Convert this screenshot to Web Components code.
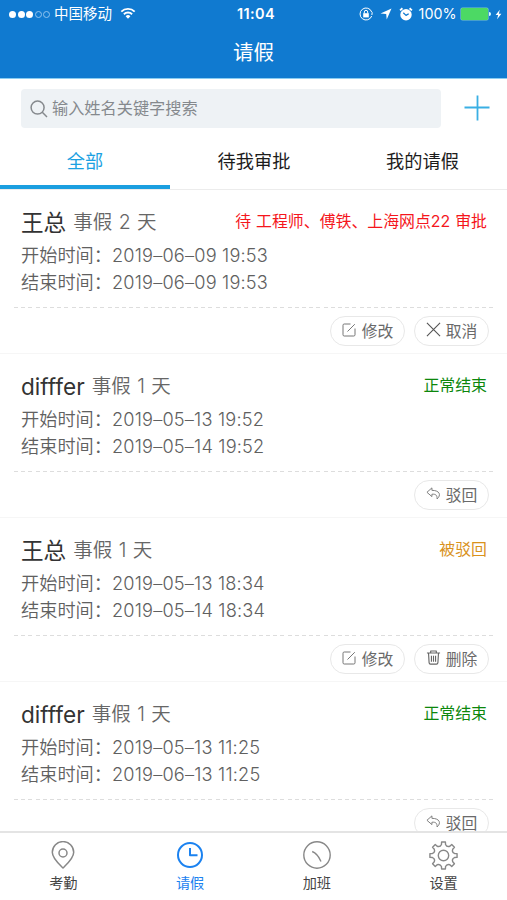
<!DOCTYPE html>
<html lang="zh-CN">
<head>
<meta charset="utf-8">
<title>请假</title>
<style>
html,body{margin:0;height:100%;overflow:hidden;background:#fff}
body{font-family:Inter,"Noto Sans CJK SC",sans-serif;color:#666}
</style>
</head>
<body>
<leave-app></leave-app>
<script>
const define = (name, html, setup) => customElements.define(name, class extends HTMLElement {
  connectedCallback() {
    if (this.shadowRoot) return;
    const root = this.attachShadow({mode: 'open'});
    const t = document.createElement('template');
    t.innerHTML = html;
    if (setup) setup(this, t.content);
    root.append(document.importNode(t.content, true));
  }
});

// Outline of a cog with eight rounded teeth, centred on the origin
const cog = (() => {
  const p = (r, deg) => { const a = deg * Math.PI / 180; return (r * Math.sin(a)).toFixed(2) + ' ' + (-r * Math.cos(a)).toFixed(2); };
  let d = '';
  for (let i = 0; i < 8; i++) {
    const a = i * 45;
    d += (i ? 'L' : 'M') + p(11.2, a - 10.5) + 'L' + p(13.7, a - 8) + 'L' + p(13.7, a + 8) + 'L' + p(11.2, a + 10.5) + 'Q' + p(8.8, a + 22.5) + ' ' + p(11.2, a + 34.5);
  }
  return d + 'Z';
})();

const icons = {
  search: ['0 0 18 18', '<circle cx="7.6" cy="7.6" r="6.5"/><path d="M12.3 12.3 17 17"/>', 1.5],
  plus: ['0 0 26 26', '<path d="M13.500 0.500V25.500M0.500 12.500H25.500"/>', 1.8],
  edit: ['0 0 14 14', '<path d="M8.500 1H2.200Q1 1 1 2.200V11.800Q1 13 2.200 13H11.800Q13 13 13 11.800V5.500M5.500 8.500 12.800 1.200"/>', 1],
  cross: ['0 0 16 16', '<path d="M1 1 15 15M15 1 1 15"/>', 1.2],
  back: ['0 0 16 14', '<path d="M6.300 1 1 5.700 6.300 10.300V7.800C10.500 7.300 12 9 11.800 12.800 16.300 9 15 3.700 6.300 3.600Z"/>', 1],
  trash: ['0 0 16 16', '<path d="M1 3.200H15M5 3V1H11V3M2.700 3.500 3.300 13.500Q3.400 15 4.800 15H11.200Q12.600 15 12.700 13.500L13.300 3.500M5.800 6V12.400M8 6V12.400M10.200 6V12.400"/>', 1.2],
  pin: ['0 0 28 28', '<path d="M14 27C10.500 23.500 3.300 17.500 3.300 11.300A10.700 10.700 0 0 1 24.700 11.300C24.700 17.500 17.500 23.500 14 27Z"/><circle cx="14" cy="12" r="4"/>', 1.5],
  clock: ['0 0 28 28', '<circle cx="14" cy="14" r="12"/><path d="M14 7V14.200H21.500"/>', 2],
  overtime: ['0 0 28 28', '<circle cx="14" cy="14" r="13.200"/><path d="M9.200 10.500Q14.500 12.500 18 20.500"/>', 1.4],
  gear: ['-14.500 -14.500 29 29', '<path d="' + cog + '"/><circle r="5.200"/>', 1.4],
  wifi: ['0 0 16 12', '<path d="M1.300 4.600A9.500 9.500 0 0 1 14.700 4.600M3.900 7.200A5.900 5.900 0 0 1 12.100 7.200" stroke-width="1.900"/><path d="M8 11.700 5.600 9.200A3.400 3.400 0 0 1 10.400 9.200Z" fill="currentColor" stroke="none"/>', 1.7],
  lock: ['0 0 14 14', '<path d="M12.700 5A6 6 0 1 0 12.700 9M13.200 5.200 12.900 8"/><rect x="4.200" y="6.200" width="5.600" height="4.200" fill="currentColor" stroke="none"/><path d="M5.300 6.500V5A1.700 1.700 0 0 1 8.700 5V6.500"/>', 1],
  arrow: ['0 0 12 12', '<path d="M11.500 0.500 6.700 11.500 6.200 5.900 0.500 5.500Z" fill="currentColor" stroke="none"/>', 0],
  alarm: ['0 0 13 13', '<circle cx="6.500" cy="7.200" r="5.300" fill="currentColor" stroke="none"/><path d="M1 3.200 3.200 1.200M9.800 1.200 12 3.200" stroke-width="1.700"/><path d="M4 5.400 6.500 7.800 9 6.200" stroke="#107ad0" stroke-width="1.200"/>', 1],
  bolt: ['0 0 8 11', '<path d="M5.500 0 0.700 6H3.600L2.400 11 7.300 4.700H4.400Z" fill="currentColor" stroke="none"/>', 0]
};
define('ui-icon', `<style>:host{display:inline-flex;flex:none}svg{display:block;width:100%;height:100%;fill:none;stroke:currentColor;stroke-linejoin:round}</style><svg></svg>`, (el, root) => {
  const [box, body, width] = icons[el.getAttribute('name')];
  const svg = root.querySelector('svg');
  svg.setAttribute('viewBox', box);
  svg.setAttribute('stroke-width', width);
  svg.innerHTML = body;
});
const nameIcon = (el, root) => root.querySelector('ui-icon').setAttribute('name', el.getAttribute('icon'));

define('status-bar', `<style>
:host{display:grid;grid-template-columns:1fr auto 1fr;align-items:center;height:28px;color:#fff;font-size:14.500px;line-height:28px}
.l,.r{display:flex;align-items:center}
.l{padding-left:9px}
.r{justify-content:flex-end;padding-right:5px}
i{width:7px;height:7px;border-radius:50%;background:#fff;margin-right:1.600px}
i.o{background:none;border:1px solid #8fc3ef;box-sizing:border-box}
.c{margin:0 8px 0 2px}
b{font-weight:600;font-size:14.500px;letter-spacing:.4px;padding-left:5px}
.bat{width:27px;height:12.500px;border-radius:1.500px;background:#4cd964;box-shadow:0 0 0 .6px #7cc3c8;margin-left:4px}
.cap{width:2px;height:4px;border-radius:0 2px 2px 0;background:#dff;margin:0 4px 0 1.500px}
</style>
<div class="l"><i></i><i></i><i></i><i class="o"></i><i class="o"></i><span class="c">中国移动</span><ui-icon name="wifi" style="width:16px;height:12px;margin-top:-2px"></ui-icon></div>
<b>11:04</b>
<div class="r"><ui-icon name="lock" style="width:14px;height:14px;margin-right:7px"></ui-icon><ui-icon name="arrow" style="width:12px;height:12px;margin-right:7px"></ui-icon><ui-icon name="alarm" style="width:14px;height:14px;margin-right:6px"></ui-icon><span style="font-size:14.300px">100%</span><span class="bat"></span><span class="cap"></span><ui-icon name="bolt" style="width:7px;height:11px"></ui-icon></div>`);

define('nav-header', `<style>
:host{display:block;height:79px;box-sizing:border-box;background:#107ad0;border-bottom:1px solid #8acdf2}
h1{margin:0;height:50px;line-height:50px;font-size:20.500px;font-weight:400;text-align:center;color:#fff}
</style><status-bar></status-bar><h1><slot></slot></h1>`);

define('search-row', `<style>
:host{display:flex;align-items:center;height:39px;padding:10px 17px 0 21px}
.box{box-sizing:border-box;flex:0 0 420px;height:39px;display:flex;align-items:center;padding-left:9px;border-radius:4px;background:#eef2f5;color:#85898d;font-size:16.200px}
.box ui-icon{width:18px;height:18px;margin-right:4px}
.box span{padding-bottom:4px}
.plus{width:26px;height:26px;margin:-2px 0 0 auto;color:#3aafe4}
</style><div class="box"><ui-icon name="search"></ui-icon><span><slot></slot></span></div><ui-icon class="plus" name="plus"></ui-icon>`);

define('filter-tabs', `<style>
:host{display:grid;grid-template-columns:170px 168px 169px;height:62px;box-sizing:border-box;border-bottom:1px solid #ececec}
::slotted(span){display:block;height:61px;box-sizing:border-box;line-height:66px;text-align:center;font-size:18.200px;color:#1c1c1c}
::slotted(.on){color:#1ba1e2;border-bottom:4px solid #1b9fe0}
</style><slot></slot>`);

define('pill-button', `<style>
:host{display:flex;align-items:center;justify-content:center;width:75px;height:30px;box-sizing:border-box;border:1px solid #e8e8e8;border-radius:15px;font-size:15.800px;line-height:28px;color:#6a6a6a;background:#fff}
ui-icon{width:14px;height:14px;margin:-3px 6px 0 0;color:#777}
:host([icon=cross]) ui-icon{width:15px;height:15px;margin-right:5px;color:#555}
:host([icon=trash]) ui-icon,:host([icon=back]) ui-icon{width:15px;height:15px;margin-right:5px}
:host([icon=trash]) ui-icon{color:#666}
span{padding-top:1px}
</style><ui-icon></ui-icon><span><slot></slot></span>`, nameIcon);

define('leave-item', `<style>
:host{display:block;height:164px;box-sizing:border-box;border-bottom:1px solid #f6f6f6;background:#fff}
.info{height:118px;box-sizing:border-box;margin:0 14px;padding:18px 6px 0 7px}
.top{display:flex;align-items:flex-start;height:33.500px;white-space:nowrap}
.name{font-size:22.600px;color:#333;line-height:29px}
.kind{font-size:19.500px;line-height:29px;margin-left:7px;font-weight:350;word-spacing:1px;color:#666}
.state{margin-left:auto;font-size:15.900px;line-height:28px;word-spacing:.5px;color:var(--state)}
.line{display:flex;height:27px;line-height:27px;font-size:18.200px;font-weight:350;color:#606060}
.from,.to{letter-spacing:.18px}
.dash{height:1px;margin:-1px 14px 0;background:repeating-linear-gradient(90deg,#ddd 0 4px,transparent 4px 7.200px)}
.acts{display:flex;justify-content:flex-end;gap:9px;padding:8px 18px 0 0}
</style>
<div class="info"><div class="top"><span class="name"></span><span class="kind"></span><span class="state"></span></div>
<div class="line"><span>开始时间：</span><span class="from"></span></div><div class="line"><span>结束时间：</span><span class="to"></span></div></div>
<div class="dash"></div><div class="acts"><slot></slot></div>`, (el, root) => {
  for (const k of ['name', 'kind', 'state', 'from', 'to']) root.querySelector('.' + k).textContent = el.getAttribute(k);
});

define('tab-item', `<style>
:host{display:flex;flex-direction:column;align-items:center;padding-top:8px;font-size:14.200px;color:#444}
ui-icon{width:28px;height:28px;color:#888}
:host([icon=gear]) ui-icon{width:29px;height:29px;margin-bottom:-1px}
:host([on]),:host([on]) ui-icon{color:#1b82f0}
span{line-height:20px;margin-top:4px}
</style><ui-icon></ui-icon><span><slot></slot></span>`, nameIcon);
define('tab-bar', `<style>:host{display:grid;grid-template-columns:repeat(4,1fr);height:69px;box-sizing:border-box;border-top:2px solid #e4e4e4;background:#fff}</style><slot></slot>`);

define('leave-app', `<style>
:host{display:flex;flex-direction:column;width:507px;height:900px;overflow:hidden}
nav-header,search-row,filter-tabs,tab-bar{flex:none}
main{flex:1;min-height:0;overflow:hidden}
</style>
<nav-header>请假</nav-header>
<search-row>输入姓名关键字搜索</search-row>
<filter-tabs><span class="on">全部</span><span>待我审批</span><span>我的请假</span></filter-tabs>
<main>
<leave-item name="王总" kind="事假 2 天" state="待 工程师、傅铁、上海网点22 审批" from="2019–06–09 19:53" to="2019–06–09 19:53" style="--state:#f5161c"><pill-button icon="edit">修改</pill-button><pill-button icon="cross">取消</pill-button></leave-item>
<leave-item name="difffer" kind="事假 1 天" state="正常结束" from="2019–05–13 19:52" to="2019–05–14 19:52" style="--state:#0c870c"><pill-button icon="back">驳回</pill-button></leave-item>
<leave-item name="王总" kind="事假 1 天" state="被驳回" from="2019–05–13 18:34" to="2019–05–14 18:34" style="--state:#d9921c"><pill-button icon="edit">修改</pill-button><pill-button icon="trash">删除</pill-button></leave-item>
<leave-item name="difffer" kind="事假 1 天" state="正常结束" from="2019–05–13 11:25" to="2019–06–13 11:25" style="--state:#0c870c"><pill-button icon="back">驳回</pill-button></leave-item>
</main>
<tab-bar><tab-item icon="pin">考勤</tab-item><tab-item icon="clock" on>请假</tab-item><tab-item icon="overtime">加班</tab-item><tab-item icon="gear">设置</tab-item></tab-bar>`);
</script>
</body>
</html>
